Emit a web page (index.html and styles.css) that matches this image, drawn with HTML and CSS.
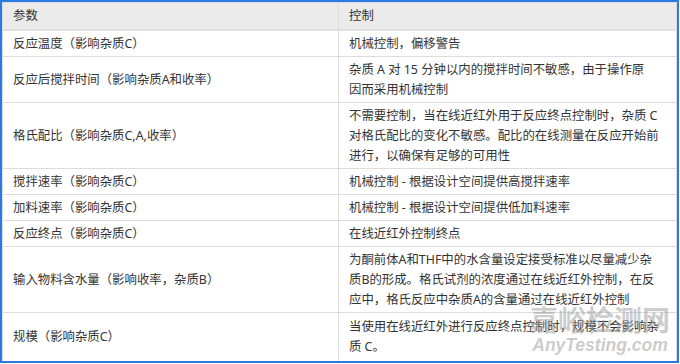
FILE: index.html
```html
<!DOCTYPE html>
<html lang="zh-CN">
<head>
<meta charset="utf-8">
<link rel="stylesheet" href="styles.css">
</head>
<body>
<div class="frame">
  <table class="grid">
    <colgroup><col class="c1"><col class="c2"></colgroup>
    <thead>
      <tr><th>参数</th><th>控制</th></tr>
    </thead>
    <tbody>
      <tr><td>反应温度（影响杂质C）</td><td>机械控制，偏移警告</td></tr>
      <tr><td>反应后搅拌时间（影响杂质A和收率）</td><td>杂质 A 对 15 分钟以内的搅拌时间不敏感，由于操作原<br>因而采用机械控制</td></tr>
      <tr><td>格氏配比（影响杂质C,A,收率）</td><td>不需要控制，当在线近红外用于反应终点控制时，杂质 C<br>对格氏配比的变化不敏感。配比的在线测量在反应开始前<br>进行，以确保有足够的可用性</td></tr>
      <tr><td>搅拌速率（影响杂质C）</td><td>机械控制 - 根据设计空间提供高搅拌速率</td></tr>
      <tr><td>加料速率（影响杂质C）</td><td>机械控制 - 根据设计空间提供低加料速率</td></tr>
      <tr><td>反应终点（影响杂质C）</td><td>在线近红外控制终点</td></tr>
      <tr><td>输入物料含水量（影响收率，杂质B）</td><td>为酮前体A和THF中的水含量设定接受标准以尽量减少杂<br>质B的形成。格氏试剂的浓度通过在线近红外控制，在反<br>应中，格氏反应中杂质A的含量通过在线近红外控制</td></tr>
      <tr class="last"><td>规模（影响杂质C）</td><td>当使用在线近红外进行反应终点控制时，规模不会影响杂<br>质 C。</td></tr>
    </tbody>
  </table>
  <div class="mark">
    <div class="mark-cn">嘉峪检测网</div>
    <div class="mark-en">AnyTesting.com</div>
  </div>
</div>
</body>
</html>
```
FILE: styles.css
```css
html, body {
  margin: 0;
  padding: 0;
  background: #ffffff;
}

.frame {
  position: relative;
  width: 679px;
  height: 363px;
  box-sizing: border-box;
  border: 2px solid #2a7ae2;
  overflow: hidden;
}

.grid {
  width: 100%;
  border-collapse: collapse;
  table-layout: fixed;
  font-family: "Noto Sans", "Noto Sans CJK SC", sans-serif;
  font-size: 12.4px;
  line-height: 20px;
  color: #333333;
}

.c1 { width: 336px; }

.grid th,
.grid td {
  border: 1px solid #dcdcdc;
  padding: 3px 10px 2px 10px;
  text-align: left;
  vertical-align: middle;
  font-weight: normal;
  white-space: nowrap;
}

.grid th {
  background: #ebebeb;
  padding-top: 3px;
  padding-bottom: 3px;
  border-bottom: 2px solid #e0e0e0;
}

.grid tr:first-child td { border-top: none; }

.grid .last td {
  padding-top: 4px;
  padding-bottom: 4px;
}

.mark {
  position: absolute;
  left: 528px;
  top: 300px;
  pointer-events: none;
  text-align: center;
}

.mark-cn {
  font-family: "Noto Sans CJK SC", sans-serif;
  font-weight: 700;
  font-size: 28px;
  line-height: 34px;
  color: rgba(160, 160, 160, 0.55);
}

.mark-en {
  font-family: "Liberation Sans", sans-serif;
  font-weight: 700;
  font-style: italic;
  font-size: 17.5px;
  line-height: 20px;
  color: rgba(160, 160, 160, 0.55);
  margin-top: -1px;
}
```
